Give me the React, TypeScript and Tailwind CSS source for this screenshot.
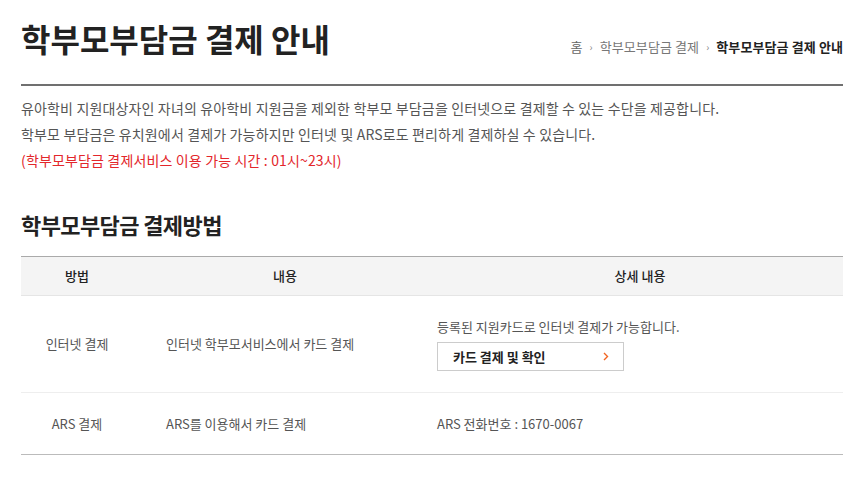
export default function App() {
  const font = { fontFamily: '"Noto Sans CJK KR", "Noto Sans", sans-serif' };
  return (
    <div className="w-[864px] h-[488px] bg-white overflow-hidden" style={font}>
      <div className="mx-[21px]">
        {/* header */}
        <div className="flex items-end justify-between border-b-2 border-[#707070] pt-[16px] pb-[24px]">
          <h1 className="text-[32px] leading-[44px] font-bold text-[#222]">학부모부담금 결제 안내</h1>
          <div className="flex items-center gap-[7px] text-[13px] leading-[20px] mb-[3px] tracking-[0.1px]">
            <span className="text-[#666]">홈</span>
            <span className="text-[#888] text-[10px]">›</span>
            <span className="text-[#777]">학부모부담금 결제</span>
            <span className="text-[#888] text-[10px]">›</span>
            <span className="text-[#222] font-bold">학부모부담금 결제 안내</span>
          </div>
        </div>

        {/* intro */}
        <div className="mt-[9px] text-[14px] leading-[26px] text-[#555] tracking-[0.15px]">
          <p>유아학비 지원대상자인 자녀의 유아학비 지원금을 제외한 학부모 부담금을 인터넷으로 결제할 수 있는 수단을 제공합니다.</p>
          <p>학부모 부담금은 유치원에서 결제가 가능하지만 인터넷 및 ARS로도 편리하게 결제하실 수 있습니다.</p>
          <p className="text-[#e3262b]">(학부모부담금 결제서비스 이용 가능 시간 : 01시~23시)</p>
        </div>

        {/* section */}
        <h2 className="mt-[36px] text-[22px] leading-[30px] font-bold text-[#222] tracking-[-0.6px]">학부모부담금 결제방법</h2>

        <table className="mt-[17px] w-full border-t border-t-[#aaa] border-b border-b-[#bbb] text-[13px]">
          <thead>
            <tr className="bg-[#f4f4f4] border-b border-[#e5e5e5]">
              <th className="w-[112px] h-[39px] font-medium text-[#222] text-center">방법</th>
              <th className="w-[304px] font-medium text-[#222] text-center">내용</th>
              <th className="font-medium text-[#222] text-center">상세 내용</th>
            </tr>
          </thead>
          <tbody className="text-[#555]">
            <tr className="border-b border-[#eee]">
              <td className="h-[97px] text-center">인터넷 결제</td>
              <td className="pl-[33px]">인터넷 학부모서비스에서 카드 결제</td>
              <td>
                <p className="leading-[20px]">등록된 지원카드로 인터넷 결제가 가능합니다.</p>
                <button className="mt-[5px] flex items-center justify-between w-[187px] h-[29px] border border-[#ccc] bg-white pl-[15px] pr-[14px] text-[13px] font-bold text-[#222]">
                  <span>카드 결제 및 확인</span>
                  <svg width="6" height="9" viewBox="0 0 6 9" fill="none">
                    <path d="M1 1l3.5 3.5L1 8" stroke="#f26522" strokeWidth="1.4" />
                  </svg>
                </button>
              </td>
            </tr>
            <tr>
              <td className="h-[62px] text-center">ARS 결제</td>
              <td className="pl-[33px]">ARS를 이용해서 카드 결제</td>
              <td>ARS 전화번호 : 1670-0067</td>
            </tr>
          </tbody>
        </table>
      </div>
    </div>
  );
}
